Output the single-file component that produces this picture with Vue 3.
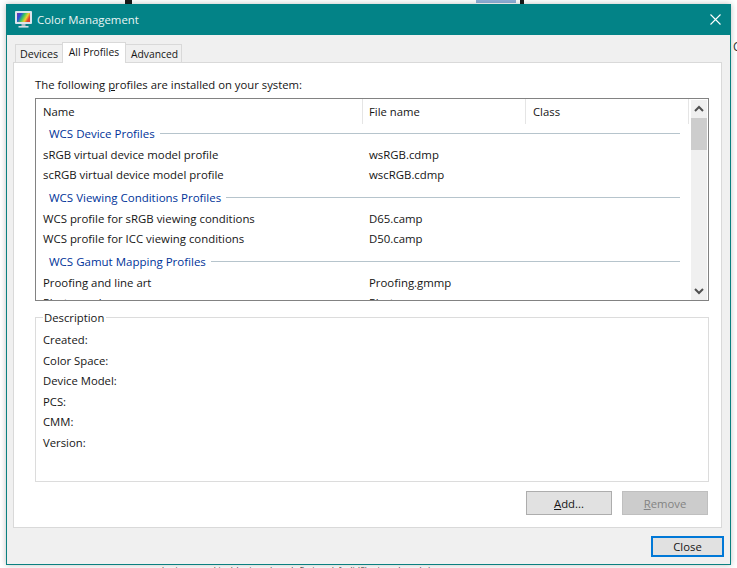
<script setup>
const columns = [
  { label: 'Name', cls: 'col-name' },
  { label: 'File name', cls: 'col-file' },
  { label: 'Class', cls: 'col-class' }
]
const groups = [
  { title: 'WCS Device Profiles', rows: [
    ['sRGB virtual device model profile', 'wsRGB.cdmp'],
    ['scRGB virtual device model profile', 'wscRGB.cdmp']
  ] },
  { title: 'WCS Viewing Conditions Profiles', rows: [
    ['WCS profile for sRGB viewing conditions', 'D65.camp'],
    ['WCS profile for ICC viewing conditions', 'D50.camp']
  ] },
  { title: 'WCS Gamut Mapping Profiles', rows: [
    ['Proofing and line art', 'Proofing.gmmp'],
    ['Photography', 'Photo.gmmp']
  ] }
]
const fields = ['Created:', 'Color Space:', 'Device Model:', 'PCS:', 'CMM:', 'Version:']
</script>

<template>
  <div class="desktop">
    <div class="bg-mark bar-a"></div>
    <div class="bg-mark blue-a"></div>
    <div class="bg-mark bar-b"></div>
    <div class="bg-text right-c">C</div>
    <div class="bg-text bottom-a">business graphics (charts and graphs)</div>
    <div class="bg-text bottom-b">System default (Charts and graphs)</div>

    <div class="window">
      <header class="titlebar">
        <svg class="app-icon" width="17" height="17" viewBox="0 0 17 17">
          <defs>
            <linearGradient id="scr" x1="0" y1="0" x2="1" y2="0.4">
              <stop offset="0" stop-color="#7a2ea8" />
              <stop offset="0.3" stop-color="#2a4fd8" />
              <stop offset="0.55" stop-color="#38c860" />
              <stop offset="0.8" stop-color="#f0d030" />
              <stop offset="1" stop-color="#e04030" />
            </linearGradient>
          </defs>
          <rect x="0" y="0" width="17" height="13" rx="1" fill="#dce4ec" />
          <rect x="2" y="2" width="13" height="9" fill="url(#scr)" />
          <rect x="6.5" y="13" width="4" height="2" fill="#a8b8c4" />
          <rect x="3.5" y="15" width="10" height="1.6" fill="#d5dde4" />
        </svg>
        <span class="title">Color Management</span>
        <svg class="close-x" width="11" height="11" viewBox="0 0 11 11">
          <path d="M0.5 0.5 L10.5 10.5 M10.5 0.5 L0.5 10.5" stroke="#fff" stroke-width="1.1" fill="none" />
        </svg>
      </header>

      <div class="body">
        <div class="tabs">
          <div class="tab tab-devices">Devices</div>
          <div class="tab tab-active">All Profiles</div>
          <div class="tab tab-advanced">Advanced</div>
        </div>

        <section class="panel">
          <p class="intro">The following <u>p</u>rofiles are installed on your system:</p>

          <div class="list">
            <div class="list-main">
              <div class="list-head">
                <div v-for="c in columns" :key="c.label" class="head-cell" :class="c.cls">{{ c.label }}</div>
              </div>
              <div class="list-body">
                <template v-for="g in groups" :key="g.title">
                  <div class="group-row">
                    <span class="group-title">{{ g.title }}</span>
                    <span class="group-line"></span>
                  </div>
                  <div v-for="r in g.rows" :key="r[0]" class="row">
                    <span class="cell-name">{{ r[0] }}</span>
                    <span class="cell-file">{{ r[1] }}</span>
                  </div>
                </template>
              </div>
            </div>
            <div class="scrollbar">
              <svg class="arrow" width="16" height="18" viewBox="0 0 16 18">
                <path d="M4 11 L8 7 L12 11" stroke="#505050" stroke-width="2" fill="none" />
              </svg>
              <div class="thumb"></div>
              <div class="track"></div>
              <svg class="arrow" width="16" height="18" viewBox="0 0 16 18">
                <path d="M4 7 L8 11 L12 7" stroke="#505050" stroke-width="2" fill="none" />
              </svg>
            </div>
          </div>

          <fieldset class="description">
            <legend>Description</legend>
            <div v-for="f in fields" :key="f" class="field">{{ f }}</div>
          </fieldset>

          <div class="panel-actions">
            <button class="btn"><u>A</u>dd...</button>
            <button class="btn btn-disabled"><u>R</u>emove</button>
          </div>
        </section>

        <div class="footer">
          <button class="btn btn-close">Close</button>
        </div>
      </div>
    </div>
  </div>
</template>

<style>
html, body { margin: 0; padding: 0; background: #fff; overflow: hidden; }
</style>

<style scoped>
.desktop {
  position: relative;
  width: 737px;
  height: 568px;
  overflow: hidden;
  background: #fff;
  padding: 4px 6px 3px;
  box-sizing: border-box;
  font-family: "Open Sans", "Noto Sans", sans-serif;
  font-size: 11.3px;
  color: #151515;
}
.bg-mark { position: absolute; top: 0; height: 4px; }
.bar-a { left: 125px; width: 7px; background: #1a1a1a; }
.blue-a { left: 476px; width: 40px; height: 3px; background: #8fb0d8; }
.bar-b { left: 520px; width: 4px; background: #1a1a1a; }
.bg-text { position: absolute; white-space: nowrap; font-size: 8px; color: #333; }
.right-c { left: 733px; top: 38px; font-size: 12px; }
.bottom-a { left: 162px; top: 563px; }
.bottom-b { left: 300px; top: 563px; }

.window {
  position: relative;
  width: 725px;
  height: 561px;
  box-sizing: border-box;
  border: 1px solid #0a8080;
  border-top: 0;
  background: #f0f0f0;
  display: flex;
  flex-direction: column;
  box-shadow: 0 0 6px rgba(0, 0, 0, 0.25);
}
.titlebar {
  height: 31px;
  flex: none;
  background: #038387;
  color: #fff;
  display: flex;
  align-items: center;
  padding: 0 9px 0 8px;
}
.app-icon { margin-right: 5px; }
.title { flex: 1; font-size: 11.4px; color: #e9f5f5; }
.body {
  flex: 1;
  display: flex;
  flex-direction: column;
  padding: 7px 8px 7px 6px;
  min-height: 0;
}
.tabs {
  display: flex;
  align-items: flex-end;
  height: 21px;
  padding-left: 2px;
  position: relative;
  z-index: 1;
  margin-bottom: -1px;
}
.tab {
  box-sizing: border-box;
  border: 1px solid #d9d9d9;
  border-bottom: 0;
  background: #f0f0f0;
  text-align: center;
  font-size: 10.7px;
  white-space: nowrap;
}
.tab-devices { width: 47px; height: 18px; line-height: 18px; border-right: 0; margin-bottom: 1px; }
.tab-active { width: 64px; height: 21px; line-height: 19px; font-size: 10.3px; background: #fff; padding-bottom: 2px; }
.tab-advanced { width: 56px; height: 18px; line-height: 18px; font-size: 10.3px; padding-left: 2px; border-left: 0; margin-bottom: 1px; }
.panel {
  flex: none;
  height: 466px;
  box-sizing: border-box;
  border: 1px solid #d9d9d9;
  background: #fff;
  padding: 14px 12px 0 21px;
  display: flex;
  flex-direction: column;
}
.intro { margin: 0; height: 21px; line-height: 16px; }

.list {
  flex: none;
  height: 203px;
  box-sizing: border-box;
  border: 1px solid #828282;
  display: flex;
  overflow: hidden;
}
.list-main { flex: 1; min-width: 0; overflow: hidden; }
.list-head { display: flex; height: 24px; }
.head-cell {
  box-sizing: border-box;
  height: 25px;
  line-height: 25px;
  padding-left: 7px;
  border-right: 1px solid #e5e5e5;
}
.col-name { width: 327px; }
.col-file { width: 163px; padding-left: 6px; }
.col-class { width: 163px; }
.group-row {
  height: 20px;
  display: flex;
  align-items: center;
  padding: 0 11px 0 13px;
  color: #003399;
  font-size: 11.5px;
}
.group-title { white-space: nowrap; }
.group-line { flex: 1; height: 1px; background: #b6c4cc; margin-left: 5px; }
.row { height: 20px; line-height: 20px; display: flex; white-space: nowrap; padding-left: 7px; font-size: 11.4px; }
.group-row + .row { margin-top: 2px; }
.row + .group-row { margin-top: 2px; }
.cell-name { width: 326px; }
.scrollbar {
  flex: none;
  width: 16px;
  margin: 1px 1px 0 0;
  background: #f0f0f0;
  display: flex;
  flex-direction: column;
}
.arrow { flex: none; display: block; }
.thumb { height: 32px; flex: none; background: #cdcdcd; }
.track { flex: 1; }

.description {
  flex: none;
  margin: 8px 0 0;
  height: 173px;
  box-sizing: border-box;
  border: 1px solid #dcdcdc;
  padding: 5px 0 0 7px;
  min-inline-size: 0;
}
.description legend { padding: 2px 2px 0 1px; margin-left: 0; line-height: 14px; }
.field { height: 20.6px; line-height: 20px; }

.panel-actions {
  display: flex;
  justify-content: flex-end;
  gap: 10px;
  margin: 9px 1px 0 0;
}
.btn {
  box-sizing: border-box;
  width: 86px;
  height: 24px;
  padding: 0;
  border: 1px solid #adadad;
  background: #e1e1e1;
  font: inherit;
  color: #151515;
}
.btn-disabled { background: #cccccc; border-color: #bfbfbf; color: #838383; }
.footer {
  flex: 1;
  display: flex;
  justify-content: flex-end;
  align-items: flex-end;
}
.btn-close {
  width: 73px;
  height: 21px;
  margin-right: -2px;
  border: 2px solid #0078d7;
  background: #e1e1e1;
}
</style>
